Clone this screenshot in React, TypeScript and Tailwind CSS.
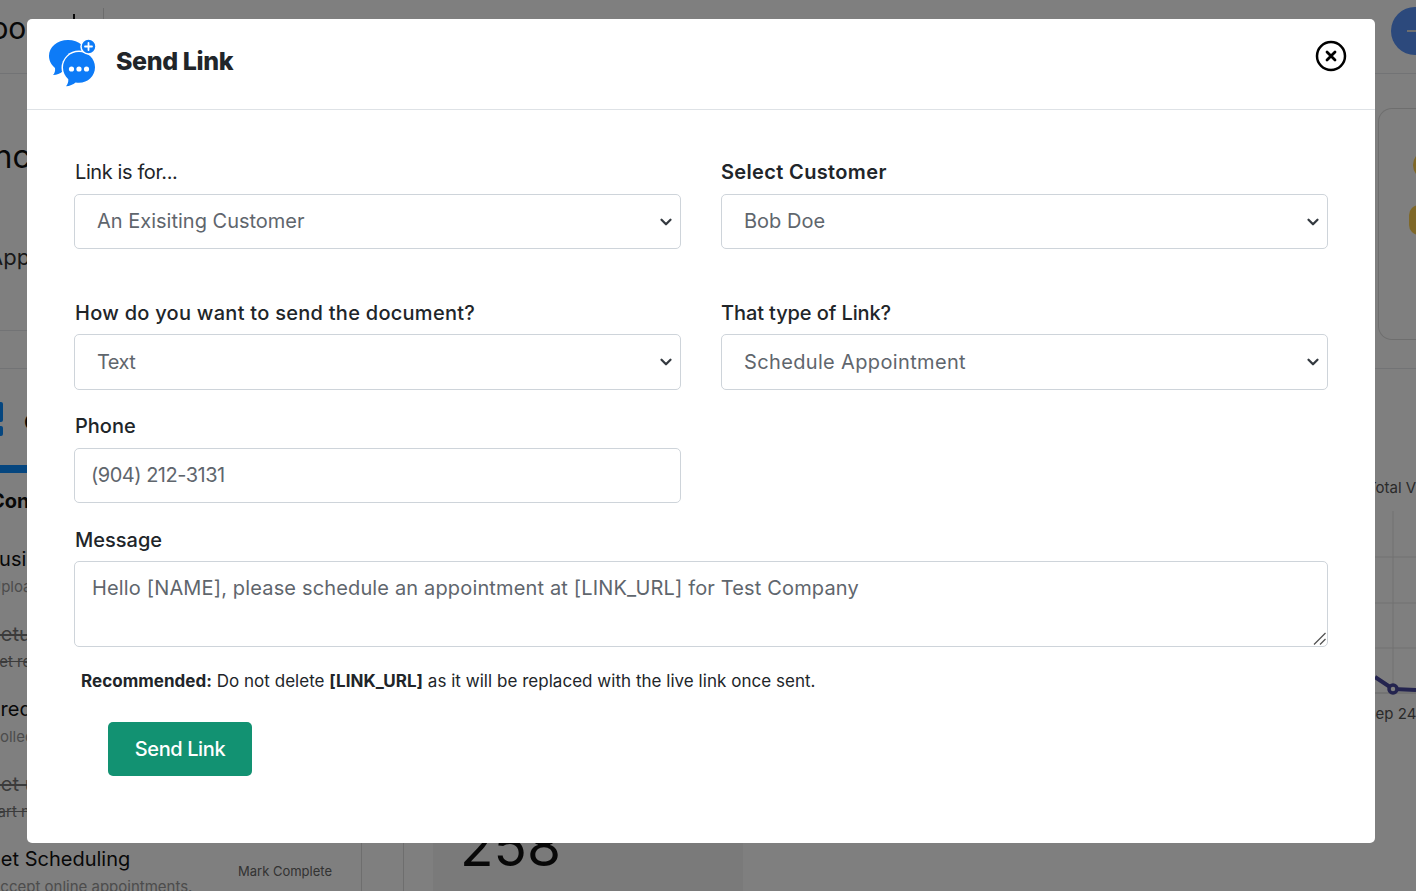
import { ChevronDown } from "lucide-react"

function Logo() {
  return (
    <svg width="50" height="50" viewBox="0 0 50 50" className="shrink-0 -ml-[1px] -mt-[2px]">
      <path d="M21 2C10 2 2 9 2 18c0 5 2.500 9 6 12 .5 3-.5 5.500-2 7 4 0 7-1.500 9.500-3.500C17 34 19 34.500 21 34.500c11 0 19-7.500 19-16.500S32 2 21 2z" fill="#0d7bf7" />
      <circle cx="32" cy="30" r="17.500" fill="#fff" />
      <path d="M32 14c-9 0-16 6.800-16 15.500 0 4.700 2 8.800 5.300 11.700.2 2.600-.6 5-2.300 7 3.800-.3 7-1.600 9.600-3.800 1.100.2 2.200.3 3.400.3 9 0 16-6.800 16-15.500S41 14 32 14z" fill="#0d7bf7" />
      <circle cx="24.500" cy="31" r="2.600" fill="#fff" />
      <circle cx="32" cy="31" r="2.600" fill="#fff" />
      <circle cx="39.500" cy="31" r="2.600" fill="#fff" />
      <circle cx="41.500" cy="8.500" r="7.500" fill="#0d7bf7" stroke="#fff" strokeWidth="1.500" />
      <path d="M41.500 5v7M38 8.500h7" stroke="#fff" strokeWidth="1.800" strokeLinecap="round" />
    </svg>
  )
}

function CloseIcon() {
  return (
    <svg width="32" height="32" viewBox="0 0 32 32">
      <circle cx="16" cy="16" r="14" fill="none" stroke="#000" strokeWidth="2.500" />
      <path d="M12 12l8 8M20 12l-8 8" stroke="#000" strokeWidth="2.800" strokeLinecap="round" />
    </svg>
  )
}

function Field({ label, labelClass, children }: { label: string; labelClass?: string; children: React.ReactNode }) {
  return (
    <div>
      <label className={`block text-[20px] leading-[30px] mb-[6px] text-[#212529] font-medium ${labelClass ?? ""}`}>{label}</label>
      {children}
    </div>
  )
}

function SelectBox({ value, textClass, tall }: { value: string; textClass?: string; tall?: boolean }) {
  return (
    <div className={`${tall ? "h-[56px]" : "h-[55px]"} border border-[#ced4da] rounded-[5px] pl-[22px] pr-[5px] flex items-center justify-between bg-white`}>
      <span className={`text-[20px] leading-[26px] ${tall ? "" : "-mt-[2px]"} text-[#5f666d] ${textClass ?? ""}`}>{value}</span>
      <ChevronDown size={18} strokeWidth={3} className="text-[#343a40]" />
    </div>
  )
}

function SendLinkDialog() {
  return (
    <div className="absolute left-[27px] top-[19px] w-[1348px] h-[824px] bg-white rounded-[5px] z-20">
      <div className="h-[91px] border-b border-[#dee2e6] pl-[21px] pr-[28px] flex items-center justify-between">
        <div className="flex items-center gap-[19px]">
          <Logo />
          <h1 className="text-[25px] leading-[30px] -mt-[7px] font-extrabold tracking-[-0.4px] text-[#212529]">Send Link</h1>
        </div>
        <div className="-mt-[16px]"><CloseIcon /></div>
      </div>
      <div className="px-[47px] pt-[47px]">
        <div className="grid grid-cols-2 gap-x-[40px]">
          <div className="[&_label]:mb-[7px]">
            <Field label="Link is for..." labelClass="font-normal tracking-[-0.4px] pl-[1px]"><SelectBox value="An Exisiting Customer" /></Field>
          </div>
          <div className="[&_label]:mb-[7px]">
            <Field label="Select Customer" labelClass="font-semibold tracking-[0.35px]"><SelectBox value="Bob Doe" /></Field>
          </div>
        </div>
        <div className="grid grid-cols-2 gap-x-[40px] mt-[49px]">
          <Field label="How do you want to send the document?" labelClass="tracking-[0.27px] pl-[1px]"><SelectBox tall value="Text" textClass="tracking-[-0.5px]" /></Field>
          <Field label="That type of Link?" labelClass="tracking-[-0.1px]"><SelectBox tall value="Schedule Appointment" textClass="tracking-[0.35px]" /></Field>
        </div>
        <div className="grid grid-cols-2 gap-x-[40px] mt-[21px]">
          <div className="[&_label]:mb-[7px]">
            <Field label="Phone" labelClass="pl-[1px]">
              <div className="h-[55px] border border-[#ced4da] rounded-[5px] pl-[16px] pb-[2px] flex items-center text-[20px] tracking-[-0.5px] text-[#5f666d]">(904) 212-3131</div>
            </Field>
          </div>
        </div>
        <div className="mt-[22px]">
          <Field label="Message" labelClass="pl-[1px]">
            <div className="relative">
              <textarea
                readOnly
                className="block w-full h-[86px] resize-none border border-[#ced4da] rounded-[5px] px-[17px] py-[11px] text-[20px] leading-[30px] tracking-[0.15px] text-[#5f666d] outline-none"
                value="Hello [NAME], please schedule an appointment at [LINK_URL] for Test Company"
              />
              <svg width="14" height="14" viewBox="0 0 14 14" className="absolute right-[1px] bottom-[1px]">
                <path d="M1 12.500L12.500 1M7 12.500l5.500-5.500" stroke="#555" strokeWidth="1.300" />
              </svg>
            </div>
          </Field>
        </div>
        <p className="mt-[19px] pl-[7px] text-[17px] leading-[30px] tracking-[0.03px] text-[#212529]">
          <b className="font-bold">Recommended:</b> Do not delete <b className="font-bold">[LINK_URL]</b> as it will be replaced with the live link once sent.
        </p>
        <button className="ml-[34px] mt-[26px] w-[144px] h-[54px] rounded-[5px] bg-[#129272] text-white text-[20px] font-medium tracking-[-0.4px]">Send Link</button>
      </div>
    </div>
  )
}

// page behind the dialog, mostly hidden - only the edges show
function ChecklistRow({ title, sub, done, shift, subShift, action }: { title: string; sub: string; done?: boolean; shift: string; subShift: string; action?: string }) {
  return (
    <div className="h-[75px] flex whitespace-nowrap">
      <div className="w-[238px]">
        <div className={`text-[20px] leading-[30px] ${shift} ${done ? "line-through text-[#777]" : "text-[#111]"}`}>{title}</div>
        <div className={`text-[15px] leading-[26px] ${subShift} ${done ? "line-through text-[#777]" : "text-[#999]"}`}>{sub}</div>
      </div>
      {action && <div className="text-[13px] leading-[20px] mt-[17px] text-[#666]">{action}</div>}
    </div>
  )
}

function BackgroundPage() {
  return (
    <div className="absolute inset-0 overflow-hidden bg-white text-[#111] flex flex-col">
      <div className="h-[74px] shrink-0 flex border-b border-[#e5e7eb]">
        <div className="w-[73px] text-[30px] leading-[36px] pt-[10px] -ml-[32px] shrink-0">Goo</div>
        <div className="w-[2px] h-[16px] mt-[14px] bg-[#111] ml-[32px]" />
        <div className="w-[1px] h-[60px] mt-[8px] bg-[#d8d8d8] ml-[28px]" />
        <div className="flex-1" />
        <div className="w-[48px] h-[48px] rounded-full bg-[#5892f8] mt-[7px] -mr-[23px] flex items-center pl-[16px] shrink-0">
          <div className="w-[20px] h-[2px] bg-[#ddd]" />
        </div>
      </div>

      <div className="h-[295px] shrink-0 flex justify-between border-b border-[#e5e7eb]">
        <div className="w-[300px] h-[257px] border-b border-[#e5e7eb] whitespace-nowrap">
          <div className="text-[32px] leading-[40px] mt-[63px] -ml-[15px]">Inc</div>
          <div className="text-[22px] leading-[30px] mt-[65px] -ml-[12px] text-[#333]">App</div>
        </div>
        <div className="w-[38px] h-[232px] mt-[34px] border border-r-0 border-[#ddd] rounded-l-[14px] overflow-hidden">
          <div className="w-[30px] h-[30px] ml-[34px] mt-[41px] rounded-full bg-[#ffd050]" />
          <div className="w-[30px] h-[30px] ml-[30px] mt-[25px] rounded-[10px] bg-[#ffd050]" />
        </div>
      </div>

      <div className="flex-1 flex min-h-0">
        <div className="w-[362px] shrink-0 border-r border-[#dcdcdc]">
          <div className="h-[96px] flex items-center">
            <div className="w-[3px] mt-[4px]">
              <div className="h-[20px] bg-[#0a8cff] rounded-r-[2px]" />
              <div className="h-[10px] mt-[4px] bg-[#0a8cff] rounded-r-[2px]" />
            </div>
            <div className="ml-[21px] mt-[10px] text-[22px] leading-[28px] font-semibold">C</div>
          </div>
          <div className="h-[8px] bg-[#0a8cff]" />
          <div className="h-[71px] pt-[14px] leading-[28px] -ml-[10px] text-[20px] font-bold whitespace-nowrap">Con</div>
          <ChecklistRow title="Business" sub="Upload" shift="-ml-[14px]" subShift="-ml-[10px]" />
          <ChecklistRow done title="Setup" sub="Get reviews" shift="-ml-[12px]" subShift="-ml-[12px]" />
          <ChecklistRow title="Credit" sub="Collect" shift="-ml-[14px]" subShift="-ml-[11px]" />
          <ChecklistRow done title="Set up" sub="Start now" shift="-ml-[12px]" subShift="-ml-[17px]" />
          <ChecklistRow title="Set Scheduling" sub="Accept online appointments." shift="-ml-[12px]" subShift="-ml-[10px]" action="Mark Complete" />
        </div>
        <div className="w-[42px] shrink-0 border-r border-[#dcdcdc]" />
        <div className="ml-[29px] w-[310px] shrink-0 bg-[#f4f4f4] flex flex-col justify-end pl-[27px] pb-[17px]">
          <div className="text-[55px] leading-[56px] text-[#111]">258</div>
        </div>
        <div className="flex-1" />
        <div className="w-[41px] shrink-0 overflow-hidden whitespace-nowrap">
          <div className="text-[15px] leading-[20px] mt-[109px] -ml-[8px] text-[#555]">Total V</div>
          <svg width="41" height="205" viewBox="0 0 41 205" className="block">
            <path d="M18 13V195" stroke="#e2e2e2" />
            <path d="M0 59H41M0 105H41M0 150H41" stroke="#e2e2e2" />
            <path d="M0 195H41" stroke="#cfcfcf" />
            <path d="M0 179L18 191L41 192" fill="none" stroke="#48489e" strokeWidth="4" />
            <circle cx="18" cy="191" r="4" fill="#fff" stroke="#48489e" strokeWidth="3.500" />
          </svg>
          <div className="text-[15px] leading-[20px] mt-[1px] -ml-[9px] text-[#555]">Sep 24</div>
        </div>
      </div>
    </div>
  )
}

export default function App() {
  return (
    <div className="relative w-[1416px] h-[891px] overflow-hidden font-['Inter',sans-serif]">
      <BackgroundPage />
      <div className="absolute inset-0 bg-black/50 z-10" />
      <SendLinkDialog />
    </div>
  )
}
